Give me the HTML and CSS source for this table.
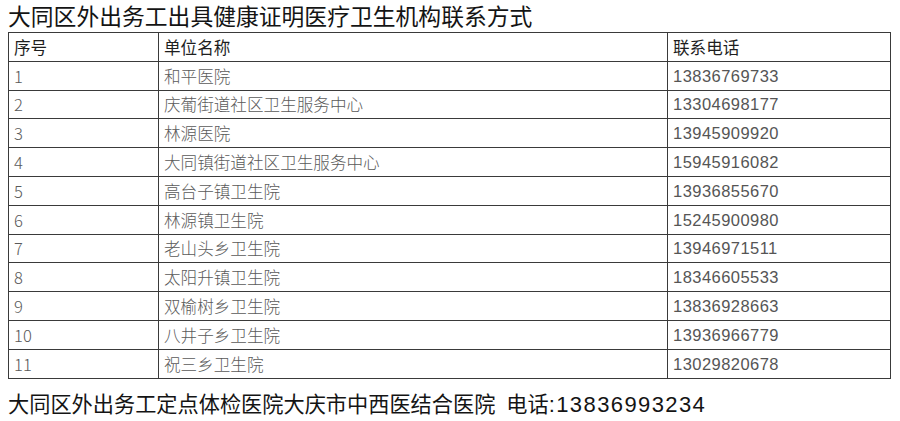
FILE: index.html
```html
<!DOCTYPE html>
<html lang="zh-CN">
<head>
<meta charset="utf-8">
<link rel="stylesheet" href="styles.css">
</head>
<body>
<div class="page">
  <h1 class="title">大同区外出务工出具健康证明医疗卫生机构联系方式</h1>
  <table class="list">
    <colgroup>
      <col class="c-no"><col class="c-name"><col class="c-tel">
    </colgroup>
    <thead>
      <tr><th>序号</th><th>单位名称</th><th>联系电话</th></tr>
    </thead>
    <tbody>
      <tr><td>1</td><td>和平医院</td><td class="tel">13836769733</td></tr>
      <tr><td>2</td><td>庆葡街道社区卫生服务中心</td><td class="tel">13304698177</td></tr>
      <tr><td>3</td><td>林源医院</td><td class="tel">13945909920</td></tr>
      <tr><td>4</td><td>大同镇街道社区卫生服务中心</td><td class="tel">15945916082</td></tr>
      <tr><td>5</td><td>高台子镇卫生院</td><td class="tel">13936855670</td></tr>
      <tr><td>6</td><td>林源镇卫生院</td><td class="tel">15245900980</td></tr>
      <tr><td>7</td><td>老山头乡卫生院</td><td class="tel">13946971511</td></tr>
      <tr><td>8</td><td>太阳升镇卫生院</td><td class="tel">18346605533</td></tr>
      <tr><td>9</td><td>双榆树乡卫生院</td><td class="tel">13836928663</td></tr>
      <tr><td>10</td><td>八井子乡卫生院</td><td class="tel">13936966779</td></tr>
      <tr><td>11</td><td>祝三乡卫生院</td><td class="tel">13029820678</td></tr>
    </tbody>
  </table>
  <p class="footer">大同区外出务工定点体检医院大庆市中西医结合医院<span class="ftel">电话<span class="num">:13836993234</span></span></p>
</div>
</body>
</html>
```
FILE: styles.css
```css
html, body {
  margin: 0;
  padding: 0;
  background: #ffffff;
}
body {
  font-family: "Noto Sans CJK SC", "Noto Sans", sans-serif;
  color: #1a1a1a;
}
.page {
  padding: 0 8px;
  width: 881px;
}
.title {
  margin: 0;
  font-size: 22.8px;
  font-weight: 400;
  line-height: 32px;
  height: 32px;
  color: #141414;
  white-space: nowrap;
}
.list {
  border-collapse: collapse;
  width: 882px;
  table-layout: fixed;
  border: 1px solid #6a6a6a;
}
.c-no { width: 150px; }
.c-name { width: 509px; }
.c-tel { width: 223px; }
.list th, .list td {
  border: 1px solid #3a3a3a;
  padding: 0 0 0 5px;
  height: 27.8px;
  text-align: left;
  vertical-align: middle;
  font-size: 16.6px;
  line-height: 20px;
  white-space: nowrap;
}
.list th {
  font-weight: 400;
  color: #1e1e1e;
}
.list td {
  color: #5a5a5a;
  font-weight: 300;
}
.list td.tel {
  font-family: "Liberation Sans", sans-serif;
  font-size: 16.5px;
  letter-spacing: 0.45px;
  color: #555555;
}
.footer {
  margin: 10px 0 0 0;
  font-size: 21.2px;
  line-height: 28px;
  color: #141414;
  white-space: nowrap;
}
.ftel {
  margin-left: 11px;
}
.num {
  font-family: "Liberation Sans", sans-serif;
  font-size: 22px;
  letter-spacing: 1.4px;
}
```
